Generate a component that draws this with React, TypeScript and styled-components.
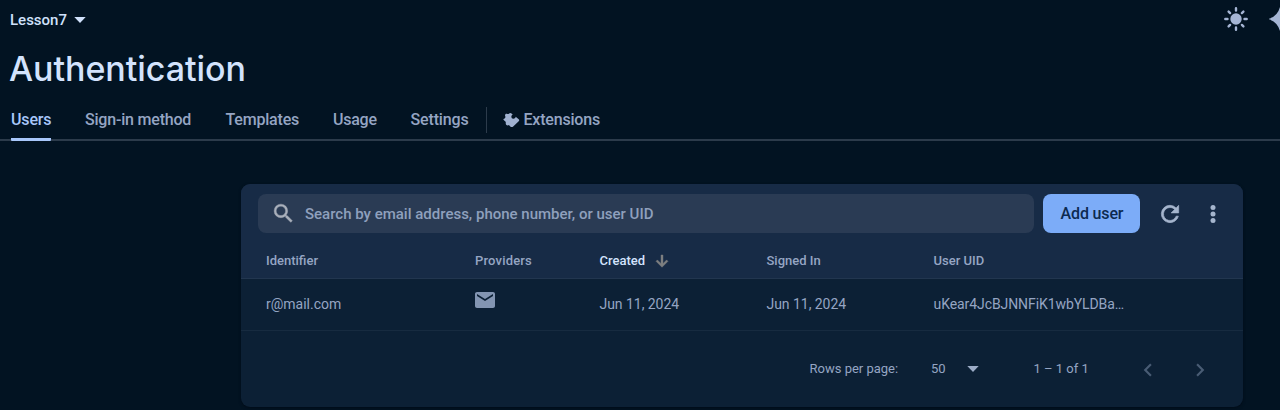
import React from "react";
import styled, { createGlobalStyle } from "styled-components";

const Global = createGlobalStyle`
  * { box-sizing: border-box; }
  body { margin: 0; background: #021322; overflow: hidden; font-family: Roboto, "Liberation Sans", sans-serif; }
`;

const Page = styled.div`
  height: 410px;
  overflow: hidden;
  display: flex;
  flex-direction: column;
`;

const TopBar = styled.header`
  flex: none;
  height: 38px;
  display: flex;
  align-items: center;
  justify-content: space-between;
  padding-left: 10px;
`;

const Label = styled.span<{ $size: number; $width: number; $weight?: number; $color?: string; $spacing?: number }>`
  display: block;
  flex: none;
  width: ${(p) => p.$width}px;
  white-space: nowrap;
  font-size: ${(p) => p.$size}px;
  font-weight: ${(p) => p.$weight ?? 400};
  letter-spacing: ${(p) => p.$spacing ?? 0}px;
  line-height: 20px;
  color: ${(p) => p.$color ?? "#95a5c3"};
`;

const Project = styled.div`
  display: flex;
  align-items: center;
  gap: 6px;
  padding-top: 1px;
  color: #d0e1fb;
`;

const TopActions = styled.div`
  width: 57px;
  display: flex;
  gap: 20px;
  overflow: hidden;
  color: #a5b5d4;
`;

const Icon = styled.svg`
  display: block;
  flex: none;
  fill: currentColor;
`;

const Title = styled.h1`
  flex: none;
  margin: 0;
  height: 62px;
  padding-left: 9px;
  font-family: Inter, sans-serif;
  font-size: 34px;
  font-weight: 500;
  letter-spacing: -0.05px;
  line-height: 61px;
  color: #d3e3fd;
`;

const Tabs = styled.nav`
  flex: none;
  height: 41px;
  display: flex;
  padding-left: 11px;
  border-bottom: 2px solid #2c3b4b;
`;

const Tab = styled.a<{ $active?: boolean; $gap: number }>`
  height: 41px;
  display: flex;
  align-items: center;
  gap: 4px;
  padding-top: 2px;
  margin-right: ${(p) => p.$gap}px;
  border-bottom: 3px solid ${(p) => (p.$active ? "#a8c7fa" : "transparent")};
  border-radius: 1px;
  color: #a0b1d0;
`;

const Divider = styled.span`
  width: 1px;
  height: 26px;
  margin: 7px 15.5px 0 0;
  background: #2c3b4b;
`;

const Card = styled.main`
  flex: none;
  width: 1002px;
  height: 223px;
  margin: 43px 0 0 241px;
  border-radius: 9px;
  overflow: hidden;
  background: #0c2035;
  box-shadow: 0 1px 3px #010c18;
`;

const Toolbar = styled.div`
  height: 59px;
  display: flex;
  align-items: center;
  padding-left: 17px;
  background: #172b46;
  color: #a5b5cd;
`;

const Search = styled.div`
  width: 777px;
  height: 39px;
  display: flex;
  align-items: center;
  gap: 9px;
  padding-left: 13px;
  border-radius: 8px;
  background: #2a3b54;
  color: #a9b0bb;
`;

const AddButton = styled.button`
  width: 97px;
  height: 39px;
  margin: 0 17px 0 9px;
  padding: 0 0 0 17.5px;
  border: 0;
  border-radius: 8px;
  background: #7cacf8;
  font-family: inherit;
  text-align: left;
`;

const Row = styled.div<{ $head?: boolean }>`
  height: ${(p) => (p.$head ? 36 : 52)}px;
  display: grid;
  grid-template-columns: 209px 124.5px 167px 167px 1fr;
  align-items: center;
  padding: 0 0 ${(p) => (p.$head ? 0 : 2)}px 25px;
  border-bottom: 1px solid ${(p) => (p.$head ? "#22364f" : "#172b40")};
  background: ${(p) => (p.$head ? "#172b46" : "transparent")};
  color: #8395b2;
`;

const Sorted = styled.div`
  display: flex;
  align-items: center;
  gap: 7px;
  color: #7d7f80;
`;

const MailCell = styled.div`
  height: 23px;
`;

const Footer = styled.div`
  height: 76px;
  display: flex;
  align-items: center;
  padding-left: 568.5px;
  color: #9cacc7;
`;

const Range = styled.div`
  width: 110px;
  padding-left: 54.5px;
`;

const PageArrows = styled.div`
  display: flex;
  gap: 26px;
  margin: 1px 0 0 46px;
  color: #495c74;
`;

const Caret = () => (
  <Icon width="12" height="6" viewBox="0 0 12 6"><path d="M0.300 0H11.700L6 6Z" /></Icon>
);

export default function App() {
  return (
    <Page>
      <Global />
      <TopBar>
        <Project>
          <Label $size={15} $width={58} $weight={500} $color="#d0e1fb">Lesson7</Label>
          <Caret />
        </Project>
        <TopActions>
          <Icon width="26" height="26" viewBox="0 0 26 26">
            <circle cx="13" cy="13" r="5.7" />
            <path d="M13 2.300v2.200M13 21.500v2.200M2.300 13h2.200M21.500 13h2.200M5.600 5.600l1.500 1.500M18.900 18.900l1.500 1.500M20.400 5.600l-1.500 1.500M7.100 18.900l-1.500 1.500" stroke="currentColor" strokeWidth="2.400" strokeLinecap="round" />
          </Icon>
          <Icon width="24" height="26" viewBox="0 0 24 26">
            <path d="M-1 13Q8.500 10.500 11 1Q13.500 10.500 23 13Q13.500 15.500 11 25Q8.500 15.500 -1 13Z" />
          </Icon>
        </TopActions>
      </TopBar>
      <Title>Authentication</Title>
      <Tabs>
        <Tab $active $gap={34}><Label $size={16} $width={40} $weight={500} $color="#a8c7fa" $spacing={-0.15}>Users</Label></Tab>
        <Tab $gap={34.5}><Label $size={16} $width={106} $weight={500} $spacing={-0.2}>Sign-in method</Label></Tab>
        <Tab $gap={34}><Label $size={16} $width={73.5} $weight={500} $spacing={-0.2}>Templates</Label></Tab>
        <Tab $gap={34.5}><Label $size={16} $width={43} $weight={500} $spacing={-0.25}>Usage</Label></Tab>
        <Tab $gap={17.5}><Label $size={16} $width={58} $weight={500} $spacing={-0.15}>Settings</Label></Tab>
        <Divider />
        <Tab $gap={0}>
          <Icon width="17" height="16" viewBox="0 0 17 16">
            <path d="M2.200 4.100C1.500 2.600 2.900 1.200 4.400 2C5 2.300 5.700 2 6.100 1.500C6.800.7 7.800.7 8.500 1.400L9.700 2.600C7.500 3.800 8.300 6.700 10.300 6.700C11.900 6.700 12.600 5.600 12.700 4.700L15.700 7.200C16.400 7.900 16.400 8.600 15.700 9.300L10.200 14.500C9.300 15.300 8.200 15.300 7.300 14.500L5.900 13C4.700 14 2.300 13 2.800 10.900C2.900 10.200 2.600 9.700 2.100 9.300L.7 8C.2 7.500.4 6.900 1 6.700C2.300 6.200 2.700 5.200 2.200 4.100Z" />
          </Icon>
          <Label $size={16} $width={77} $weight={500} $spacing={-0.2}>Extensions</Label>
        </Tab>
      </Tabs>
      <Card>
        <Toolbar>
          <Search>
            <Icon width="25" height="25" viewBox="0 0 24 24"><path d="M15.500 14h-.79l-.28-.27A6.471 6.471 0 0 0 16 9.500 6.500 6.500 0 1 0 9.500 16c1.610 0 3.090-.59 4.230-1.570l.27.28v.79l5 4.990L20.490 19l-4.990-5zm-6 0C7.010 14 5 11.990 5 9.500S7.010 5 9.500 5 14 7.010 14 9.500 11.990 14 9.500 14z" stroke="currentColor" strokeWidth="0.4" /></Icon>
            <Label $size={15} $width={360} $weight={500} $color="#8fa0bd">Search by email address, phone number, or user UID</Label>
          </Search>
          <AddButton><Label $size={16} $width={63} $weight={500} $color="#0c2a50" $spacing={-0.15}>Add user</Label></AddButton>
          <Icon width="26" height="26" viewBox="0 0 24 24"><path d="M17.650 6.350A7.958 7.958 0 0 0 12 4a8 8 0 1 0 7.730 10h-2.080A6 6 0 1 1 12 6c1.660 0 3.140.69 4.220 1.780L13 11h7V4l-2.350 2.350z" stroke="currentColor" strokeWidth="0.6" /></Icon>
          <Icon width="60" height="26" viewBox="0 0 60 26"><circle cx="30" cy="6.500" r="2.500" /><circle cx="30" cy="13" r="2.500" /><circle cx="30" cy="19.500" r="2.500" /></Icon>
        </Toolbar>
        <Row $head>
          <Label $size={13} $width={100} $weight={500}>Identifier</Label>
          <Label $size={13} $width={100} $weight={500} $spacing={0.18}>Providers</Label>
          <Sorted>
            <Label $size={13} $width={47} $weight={500} $color="#d3e3fd">Created</Label>
            <Icon width="16" height="16" viewBox="0 0 16 16"><path d="M7 2h2v8.500l3.600-3.600L14 8.300l-6 6-6-6 1.400-1.400L7 10.500z" stroke="currentColor" strokeWidth="0.4" /></Icon>
          </Sorted>
          <Label $size={13} $width={100} $weight={500}>Signed In</Label>
          <Label $size={13} $width={100} $weight={500}>User UID</Label>
        </Row>
        <Row>
          <Label $size={14} $width={100}>r@mail.com</Label>
          <MailCell>
            <Icon width="20" height="16" viewBox="2 4 20 16" preserveAspectRatio="none"><path d="M20 4H4c-1.100 0-1.990.9-1.990 2L2 18c0 1.100.9 2 2 2h16c1.100 0 2-.9 2-2V6c0-1.100-.9-2-2-2zm0 4l-8 5-8-5V6l8 5 8-5v2z" /></Icon>
          </MailCell>
          <Label $size={14} $width={100} $spacing={-0.04}>Jun 11, 2024</Label>
          <Label $size={14} $width={100} $spacing={-0.04}>Jun 11, 2024</Label>
          <Label $size={14} $width={200} $spacing={-0.08}>uKear4JcBJNNFiK1wbYLDBa…</Label>
        </Row>
        <Footer>
          <Label $size={13} $width={121.5}>Rows per page:</Label>
          <Label $size={13} $width={36}>50</Label>
          <Caret />
          <Range><Label $size={13} $width={55.5}>1 – 1 of 1</Label></Range>
          <PageArrows>
            <Icon width="26" height="26" viewBox="0 0 24 24"><path d="M15.410 7.410L14 6l-6 6 6 6 1.410-1.410L10.830 12z" /></Icon>
            <Icon width="26" height="26" viewBox="0 0 24 24"><path d="M8.590 16.590L10 18l6-6-6-6-1.410 1.410L13.170 12z" /></Icon>
          </PageArrows>
        </Footer>
      </Card>
    </Page>
  );
}
